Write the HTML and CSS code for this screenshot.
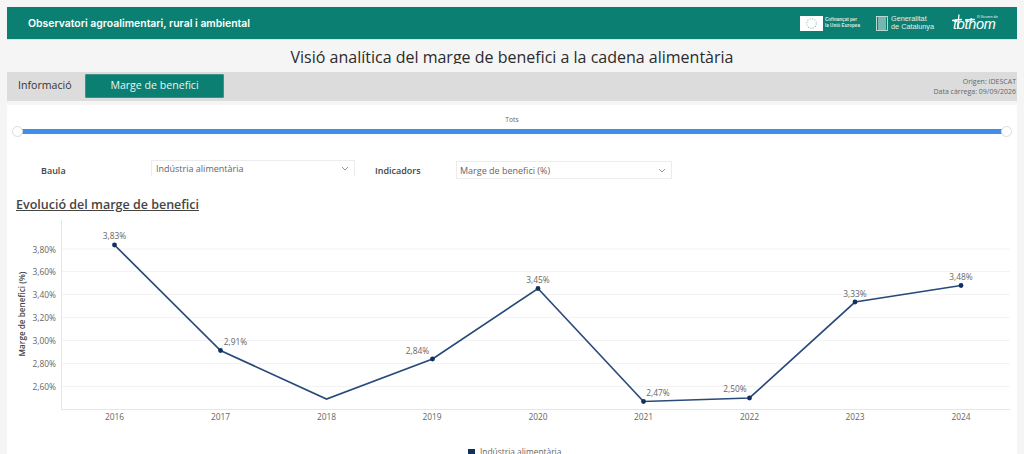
FILE: index.html
```html
<!DOCTYPE html>
<html lang="ca">
<head>
<meta charset="utf-8">
<title>Observatori agroalimentari, rural i ambiental</title>
<link rel="stylesheet" href="styles.css">
</head>
<body>
<div class="page">
  <header class="topbar">
    <div class="brand">Observatori agroalimentari, rural i ambiental</div>
    <div class="logos">
      <div class="eu">
        <div class="eu-flag">
          <svg width="23" height="15" viewBox="0 0 23 15"><circle cx="11.500" cy="7.500" r="4.800" fill="none" stroke="#8fc0b4" stroke-width="1.100" stroke-dasharray="1.100 1.400"/></svg>
        </div>
        <div class="eu-text">Cofinançat per<br>la Unió Europea</div>
      </div>
      <div class="gencat">
        <svg width="12" height="15" viewBox="0 0 12 15"><g fill="none" stroke="#e3efec"><rect x=".5" y=".5" width="11" height="14" stroke-width=".8"/><path d="M3 1v13M5 1v13M7 1v13M9 1v13" stroke-width="1"/></g></svg>
        <div class="gencat-text">Generalitat<br>de Catalunya</div>
      </div>
      <div class="tothom">
        <svg class="tothom-cross" width="24" height="17" viewBox="0 0 24 17"><path d="M0 6.500 10 5.500M7 .5 5.500 15M13 6 23 5.500" fill="none" stroke="#fff" stroke-width="1.300"/></svg>
        <span class="tothom-word">tothom</span>
        <span class="tothom-small">El Govern de</span>
      </div>
    </div>
  </header>

  <h1 class="title"><span>Visió analítica del marge de benefici a la cadena alimentària</span></h1>

  <nav class="tabs">
    <div class="tab">Informació</div>
    <div class="tab active">Marge de benefici</div>
    <div class="source">Origen: IDESCAT<br>Data càrrega: 09/09/2026</div>
  </nav>

  <main class="panel">
    <div class="slider">
      <div class="slider-label">Tots</div>
      <div class="track"><span class="knob"></span><span class="knob"></span></div>
    </div>

    <div class="filters">
      <label class="filter-label first">Baula</label>
      <div class="select wide">
        <span>Indústria alimentària</span>
        <svg width="8" height="5" viewBox="0 0 8 5"><path d="M1 1l3 3 3-3" fill="none" stroke="#888" stroke-width=".9"/></svg>
      </div>
      <label class="filter-label second">Indicadors</label>
      <div class="select narrow">
        <span>Marge de benefici (%)</span>
        <svg width="8" height="5" viewBox="0 0 8 5"><path d="M1 1l3 3 3-3" fill="none" stroke="#888" stroke-width=".9"/></svg>
      </div>
    </div>

    <h2 class="chart-title">Evolució del marge de benefici</h2>

    <svg class="chart" width="1010" height="244" viewBox="7 210 1010 244">
      <g class="grid">
        <path d="M61 249H1010M61 271.500H1010M61 294.500H1010M61 317.500H1010M61 340.500H1010M61 363.500H1010M61 386.500H1010"/>
      </g>
      <path class="axis" d="M61.500 220V409.500H1010"/>
      <g class="ylabels">
        <text x="56" y="252.500">3,80%</text>
        <text x="56" y="275">3,60%</text>
        <text x="56" y="298">3,40%</text>
        <text x="56" y="321">3,20%</text>
        <text x="56" y="344">3,00%</text>
        <text x="56" y="367">2,80%</text>
        <text x="56" y="390">2,60%</text>
      </g>
      <text class="ytitle" transform="translate(25 314) rotate(-90)">Marge de benefici (%)</text>
      <g class="xlabels">
        <text x="114.500" y="420">2016</text>
        <text x="220.500" y="420">2017</text>
        <text x="326.500" y="420">2018</text>
        <text x="432" y="420">2019</text>
        <text x="538" y="420">2020</text>
        <text x="643.500" y="420">2021</text>
        <text x="749.500" y="420">2022</text>
        <text x="855" y="420">2023</text>
        <text x="961" y="420">2024</text>
      </g>
      <polyline class="line" points="114.500,245 220.500,350.500 326.500,399 432.500,359 538,288.500 643.500,401.500 749.500,398 855,302 961,285.500"/>
      <g class="dots">
        <circle cx="114.500" cy="245" r="2.400"/>
        <circle cx="220.500" cy="350.500" r="2.400"/>
        <circle cx="432.500" cy="359" r="2.400"/>
        <circle cx="538" cy="288.500" r="2.400"/>
        <circle cx="643.500" cy="401.500" r="2.400"/>
        <circle cx="749.500" cy="398" r="2.400"/>
        <circle cx="855" cy="302" r="2.400"/>
        <circle cx="961" cy="285.500" r="2.400"/>
      </g>
      <g class="values">
        <text x="114.500" y="239">3,83%</text>
        <text x="235.500" y="345">2,91%</text>
        <text x="417.500" y="354">2,84%</text>
        <text x="538" y="283">3,45%</text>
        <text x="658" y="396">2,47%</text>
        <text x="735" y="392">2,50%</text>
        <text x="855" y="296.500">3,33%</text>
        <text x="961" y="279.500">3,48%</text>
      </g>
      <rect class="legend-box" x="468" y="449" width="7" height="7"/>
      <text class="legend" x="480" y="455">Indústria alimentària</text>
    </svg>
  </main>
</div>
</body>
</html>
```

FILE: styles.css
```css
* { box-sizing: border-box; }
html, body { margin: 0; height: 454px; overflow: hidden; }
body { background: #f5f5f5; font-family: "Open Sans", "Liberation Sans", sans-serif; color: #333; }
.page { padding: 7px 7px 0; display: flex; flex-direction: column; height: 454px; overflow: hidden; }

.topbar { height: 33px; flex: none; background: #0b7f71; border-bottom: 1px solid #d5e4e1; display: flex; align-items: center; justify-content: space-between; padding: 0 17px 0 21px; }
.brand { font-family: Inter, "Liberation Sans", sans-serif; font-size: 10.450px; font-weight: 600; color: #fff; }
.logos { display: flex; align-items: center; }
.eu { display: flex; align-items: center; gap: 2px; }
.eu-flag { width: 23px; height: 15px; background: #fff; display: flex; }
.eu-text { font-family: "Liberation Sans", sans-serif; font-size: 4.600px; line-height: 6.500px; color: #dcebe8; width: 34px; font-weight: 700; white-space: nowrap; }
.gencat { display: flex; align-items: center; gap: 3px; margin-left: 17px; }
.gencat-text { font-family: "Liberation Sans", sans-serif; font-size: 7.300px; line-height: 8px; color: #e3efec; width: 44px; }
.tothom { position: relative; width: 48px; height: 18px; margin-left: 17px; }
.tothom-cross { position: absolute; left: 0; top: 0; }
.tothom-word { position: absolute; left: 1px; top: 2px; font-family: "Liberation Sans", sans-serif; font-style: italic; font-size: 14.500px; line-height: 16px; letter-spacing: -.3px; color: #fff; }
.tothom-small { position: absolute; left: 25px; top: 0; font-size: 3.500px; line-height: 5px; color: #fff; white-space: nowrap; }

.title { flex: none; height: 32px; margin: 0; padding-top: 6px; font-size: 16px; line-height: 22px; font-weight: 400; text-align: center; color: #2b2b2b; }
.title span { display: block; height: 18px; overflow: hidden; }

.tabs { flex: none; height: 29px; background: #dcdcdc; display: flex; align-items: center; }
.tab { font-family: "Open Sans", sans-serif; font-size: 10.600px; color: #333; }
.tab:first-child { width: 78px; padding-left: 11px; padding-bottom: 3px; }
.tab.active { width: 139px; height: 24px; margin-bottom: 1px; background: #0b7f71; color: #e9f4f2; text-align: center; line-height: 20px; border-radius: 1px; border: 1px solid #3a9487; }
.source { margin-left: auto; padding-right: 1px; text-align: right; font-size: 7px; line-height: 10px; color: #666; }

.panel { flex: 1; margin-top: 4px; background: #fff; min-height: 0; position: relative; }
.slider { height: 44px; padding-top: 10px; }
.slider-label { font-size: 6.700px; line-height: 10px; text-align: center; color: #666; }
.track { margin: 4px 15px 0 11px; height: 5px; background: #3f8ee9; display: flex; justify-content: space-between; align-items: center; }
.knob { width: 11px; height: 11px; border-radius: 50%; background: #fff; border: 1px solid #dcdcdc; }
.knob:first-child { margin-left: -6px; }
.knob:last-child { margin-right: -10px; }

.filters { display: flex; align-items: flex-start; padding-top: 11px; height: 45px; }
.filter-label { font-size: 9px; font-weight: 600; color: #444; line-height: 20px; }
.first { width: 110px; margin-left: 34px; margin-top: 1px; }
.second { width: 81px; margin-left: 20px; margin-top: 1px; }
.select { display: flex; align-items: center; justify-content: space-between; font-size: 9px; color: #666; background: #fff; border: 1px solid #ececec; padding: 0 5px 0 3px; }
.wide { width: 204px; height: 16px; border-bottom: 0; padding-left: 4px; }
.narrow { width: 216px; height: 18px; margin-top: 1px; }

.chart-title { margin: 2px 0 0 9px; font-size: 12.500px; line-height: 18px; font-weight: 600; color: #444; text-decoration: underline; height: 14px; }
.chart { display: block; }
.grid path { stroke: #f3f3f3; stroke-width: 1; fill: none; }
.axis { stroke: #e6e6e6; stroke-width: 1; fill: none; }
.ylabels text { font-size: 8.400px; fill: #666; text-anchor: end; }
.xlabels text { font-size: 8.400px; fill: #666; text-anchor: middle; }
.ytitle { font-size: 8.200px; font-weight: 600; fill: #444; text-anchor: middle; }
.line { fill: none; stroke: #2a4a78; stroke-width: 1.700; }
.dots circle { fill: #12305f; }
.values text { font-size: 8.400px; fill: #666; text-anchor: middle; }
.legend-box { fill: #12305f; }
.legend { font-size: 8.400px; fill: #666; }
```
